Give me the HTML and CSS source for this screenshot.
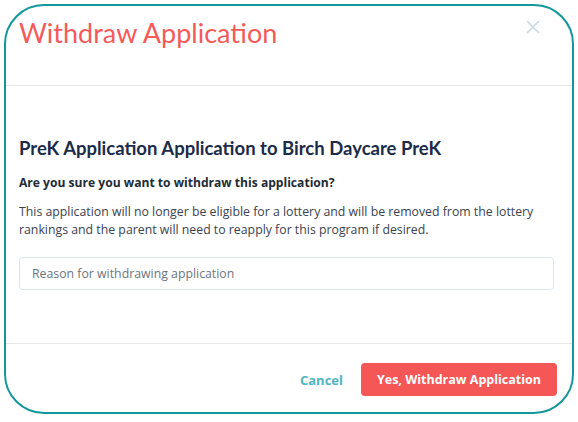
FILE: index.html
```html
<!DOCTYPE html>
<html>
<head>
<meta charset="utf-8">
<link rel="stylesheet" href="styles.css">
</head>
<body>
<div class="dialog">
  <div class="header">
    <h1 class="title">Withdraw Application</h1>
    <button class="close" aria-label="Close">
      <svg width="14" height="14" viewBox="0 0 14 14"><path d="M1 1L13 13M13 1L1 13" stroke="#c9d9e0" stroke-width="1.6" fill="none"/></svg>
    </button>
  </div>
  <div class="body">
    <h2 class="heading">PreK Application Application to Birch Daycare PreK</h2>
    <p class="question">Are you sure you want to withdraw this application?</p>
    <p class="text">This application will no longer be eligible for a lottery and will be removed from the lottery rankings and the parent will need to reapply for this program if desired.</p>
    <input class="reason" type="text" placeholder="Reason for withdrawing application">
  </div>
  <div class="footer">
    <button class="cancel">Cancel</button>
    <button class="confirm">Yes, Withdraw Application</button>
  </div>
</div>
</body>
</html>
```

FILE: styles.css
```css
html, body { margin: 0; padding: 0; background: #fff; }
body { padding: 4px; font-family: "Open Sans", sans-serif; }
.dialog {
  width: 570px;
  height: 410px;
  box-sizing: border-box;
  border: 2px solid #12979d;
  border-radius: 40px;
  display: flex;
  flex-direction: column;
  overflow: hidden;
}
.header {
  height: 80px;
  box-sizing: border-box;
  border-bottom: 1px solid #e6e6e6;
  display: flex;
  justify-content: space-between;
  align-items: flex-start;
  padding: 10px 32px 0 13px;
}
.title {
  margin: 0;
  font-family: "Lato", sans-serif;
  font-weight: 400;
  font-size: 27px;
  line-height: 34px;
  color: #f55a5a;
}
.close {
  border: 0;
  background: none;
  padding: 0;
  margin-top: 4px;
  width: 14px;
  height: 14px;
}
.close svg { display: block; }
.body {
  flex: 1;
  padding: 50px 18px 0 13px;
}
.heading {
  margin: 0;
  font-family: "Lato", sans-serif;
  font-weight: 700;
  font-size: 18.5px;
  line-height: 24px;
  color: #1b2b49;
}
.question {
  margin: 14px 0 0;
  font-size: 12.1px;
  font-weight: 700;
  line-height: 18px;
  color: #222b36;
}
.text {
  margin: 11px 0 0;
  font-size: 12.3px;
  line-height: 18px;
  color: #3a4350;
}
.reason {
  display: block;
  box-sizing: border-box;
  width: 535px;
  height: 33px;
  margin-top: 18px;
  border: 1px solid #d9e6ef;
  border-radius: 4px;
  padding: 0 12px;
  font-family: "Open Sans", sans-serif;
  font-size: 12.3px;
  color: #333;
  outline: none;
}
.reason::placeholder { color: #6b7580; }
.footer {
  height: 69px;
  box-sizing: border-box;
  border-top: 1px solid #e6e6e6;
  display: flex;
  justify-content: flex-end;
  align-items: flex-start;
  padding: 19px 15px 0 0;
  gap: 14px;
}
.cancel {
  border: 0;
  background: none;
  font-family: "Open Sans", sans-serif;
  font-weight: 700;
  font-size: 13px;
  color: #4fb4c0;
  height: 33px;
  padding: 0 4px;
}
.confirm {
  border: 0;
  background: #f55656;
  color: #fff;
  font-family: "Open Sans", sans-serif;
  font-weight: 700;
  font-size: 12.5px;
  height: 33px;
  width: 196px;
  border-radius: 4px;
}
```
